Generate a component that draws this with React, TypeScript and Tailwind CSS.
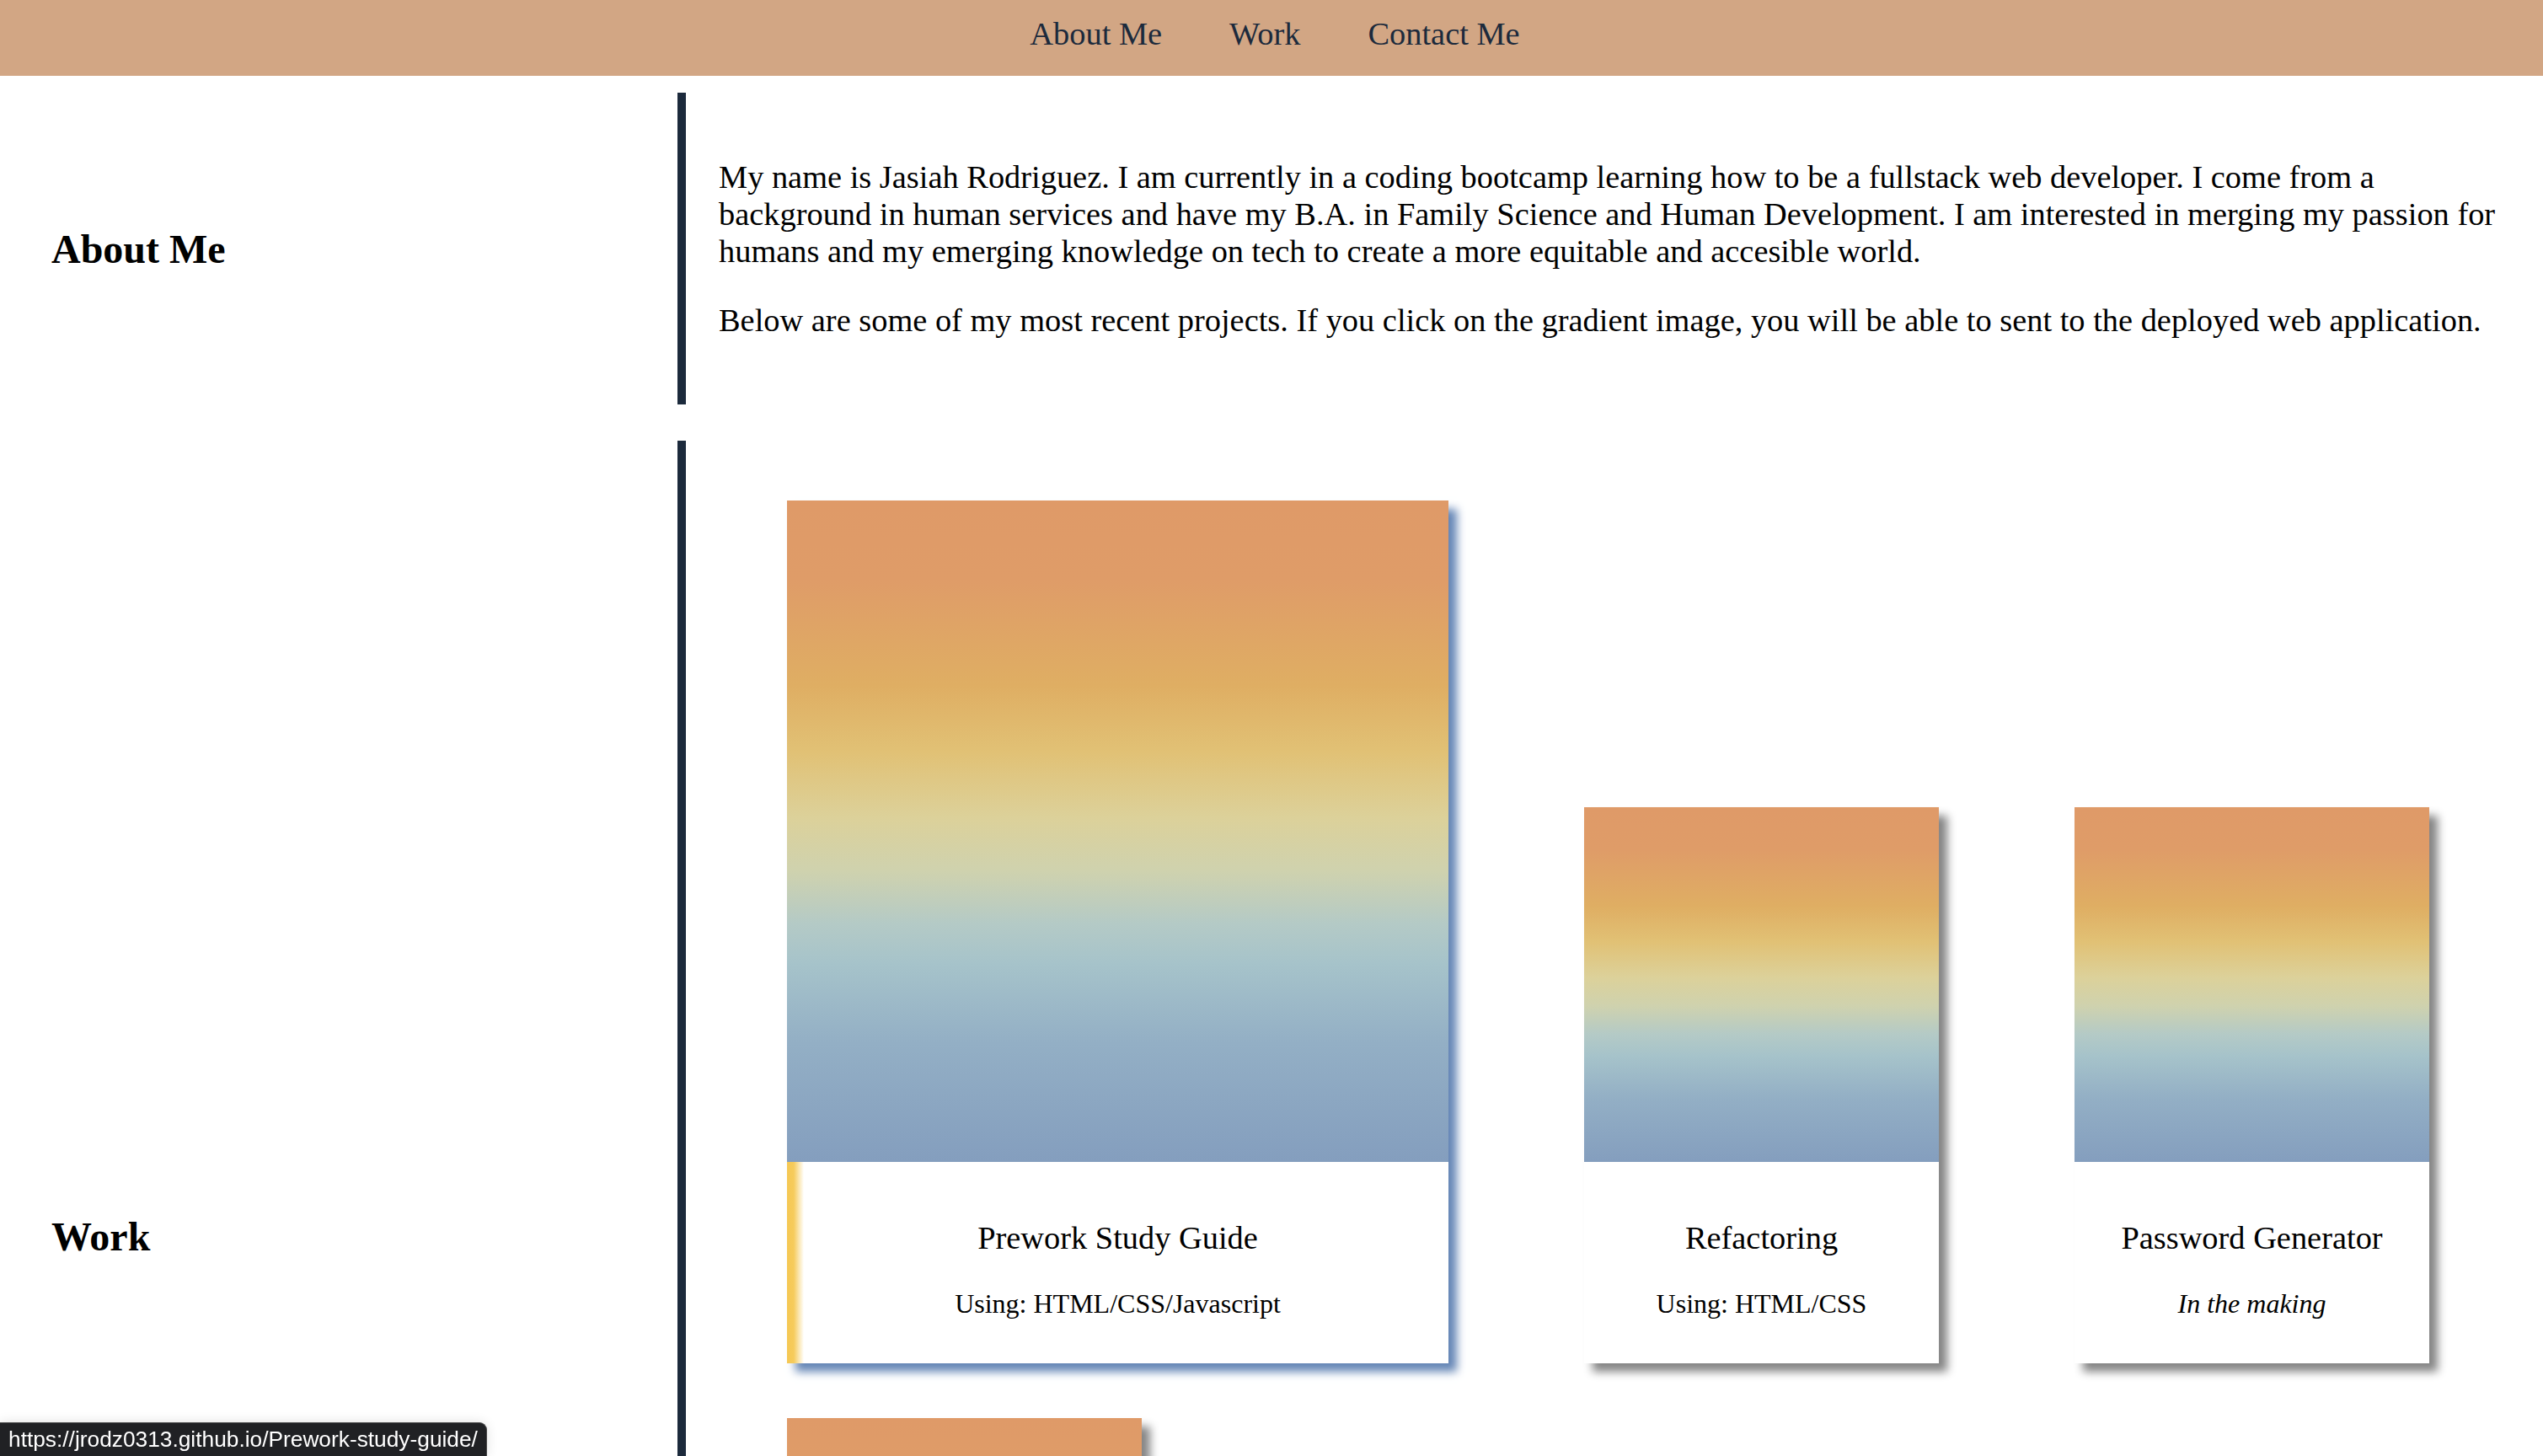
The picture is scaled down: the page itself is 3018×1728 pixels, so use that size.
import React from 'react';

interface Project {
  title: string;
  note: string;
  big?: boolean;
  italic?: boolean;
  hovered?: boolean;
}

// last card sits below the fold, only its gradient top is visible
const PROJECTS: Project[] = [
  { title: 'Prework Study Guide', note: 'Using: HTML/CSS/Javascript', big: true, hovered: true },
  { title: 'Refactoring', note: 'Using: HTML/CSS' },
  { title: 'Password Generator', note: 'In the making', italic: true },
  { title: '', note: '' },
];

const GRADIENT =
  'bg-[linear-gradient(180deg,#df9a68_0%,#df9c68_12%,#dfae63_28%,#e1c175_38%,#dcd19a_48%,#cfd2ae_56%,#b4cac6_64%,#a6c3ca_70%,#93afc5_82%,#849ebe_100%)]';

const ProjectCard: React.FC<{ project: Project }> = ({ project }) => {
  const { title, note, big, italic, hovered } = project;
  return (
    <a
      href="#"
      className={
        'flex flex-col bg-white ' +
        (hovered ? 'shadow-[10px_10px_10px_#6586b6]' : 'shadow-[10px_10px_10px_#858585]')
      }
    >
      <div className={(big ? 'w-[785px] h-[785px] ' : 'w-[421px] h-[421px] ') + GRADIENT} />
      <div
        className={
          'h-[239px] flex flex-col items-center pt-[68px] ' +
          (hovered
            ? 'bg-[linear-gradient(90deg,#f5c853_0px,#f6cb5c_8px,#ffffff_20px)]'
            : 'bg-white')
        }
      >
        {title && <h3 className="text-[38.4px] leading-[44px] text-black">{title}</h3>}
        {note && (
          <p className={'mt-[38px] text-[32px] leading-[37px] text-black ' + (italic ? 'italic' : '')}>
            {note}
          </p>
        )}
      </div>
    </a>
  );
};

export default function App() {
  return (
    <div className="relative h-screen overflow-hidden bg-white font-['Liberation_Serif',serif] text-black">
      {/* Header nav */}
      <header className="h-[90px] bg-[#d2a684] flex justify-center gap-[80px] pt-[18px] pl-[8px]">
        {['About Me', 'Work', 'Contact Me'].map(item => (
          <a key={item} href="#" className="text-[38.4px] leading-[44px] text-[#1c2a3c]">
            {item}
          </a>
        ))}
      </header>

      {/* About */}
      <section className="mt-[20px] flex">
        <div className="w-[804px] shrink-0 flex items-center pl-[61px]">
          <h2 className="text-[48px] font-bold leading-[55px]">About Me</h2>
        </div>
        <div className="flex-1 border-l-[10px] border-[#1c2a3c] py-[40px] pl-[39px] pr-[36px] text-[38.4px] leading-[44px]">
          <p className="my-[38px]">
            My name is Jasiah Rodriguez. I am currently in a coding bootcamp learning how to be a fullstack web
            developer. I come from a background in human services and have my B.A. in Family Science and Human
            Development. I am interested in merging my passion for humans and my emerging knowledge on tech to create a
            more equitable and accesible world.
          </p>
          <p className="my-[38px]">
            Below are some of my most recent projects. If you click on the gradient image, you will be able to sent to
            the deployed web application.
          </p>
        </div>
      </section>

      {/* Work */}
      <section className="mt-[43px] flex">
        <div className="w-[804px] shrink-0 flex items-center pl-[61px] pb-[2px]">
          <h2 className="text-[48px] font-bold leading-[55px]">Work</h2>
        </div>
        <div className="flex-1 border-l-[10px] border-[#1c2a3c] pt-[71px] pl-[120px] pb-[70px] flex flex-wrap items-end gap-x-[161px] gap-y-[65px]">
          {PROJECTS.map((p, i) => (
            <ProjectCard key={i} project={p} />
          ))}
        </div>
      </section>

      {/* Browser link status */}
      <div className="fixed bottom-0 left-0 h-[40px] w-[578px] flex items-center pl-[10px] bg-[#202124] rounded-tr-[9px] border-t border-r border-[#4a4a4a] shadow-[0_0_14px_rgba(0,0,0,0.12)] font-['Liberation_Sans',sans-serif] text-[26.3px] text-white">
        https://jrodz0313.github.io/Prework-study-guide/
      </div>
    </div>
  );
}
